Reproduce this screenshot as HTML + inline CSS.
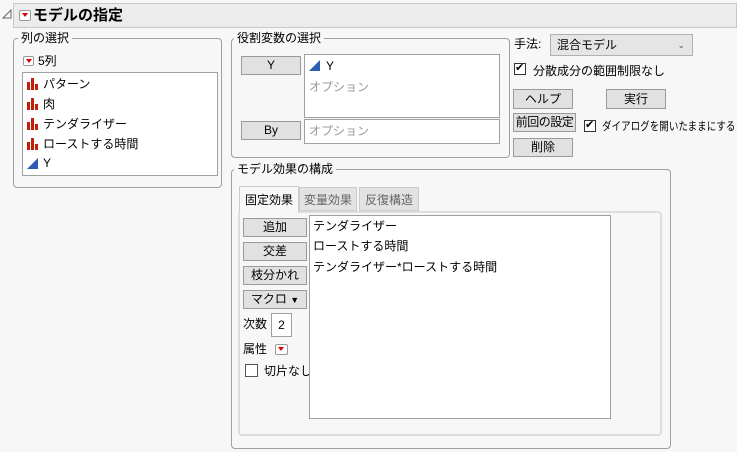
<!DOCTYPE html>
<html><head><meta charset="utf-8"><style>
*{box-sizing:border-box;margin:0;padding:0}
body{width:737px;height:452px;background:#f7f7f7;font-family:"Liberation Sans","Noto Sans CJK JP",sans-serif;font-size:12px;color:#000;position:relative;overflow:hidden}
.a{position:absolute;white-space:nowrap}
.grp{position:absolute;border:1px solid #a0a0a0;border-radius:4px}
.lbl{position:absolute;background:#f7f7f7;padding:0 3px;line-height:14px;font-size:12px;white-space:nowrap}
.btn{position:absolute;background:#e1e1e1;border:1px solid #9a9a9a;text-align:center;font-size:12px;white-space:nowrap}
.box{position:absolute;background:#fff;border:1px solid #a0a0a0}
.red{position:absolute;width:11px;height:10px;border:1px solid #999;background:#fff;border-radius:2px}
.red:after{content:"";position:absolute;left:2px;top:2px;border-left:3px solid transparent;border-right:3px solid transparent;border-top:4px solid #d00}
.cb{position:absolute;width:12px;height:12px;border:1px solid #333;background:#fff}
.t{position:absolute;line-height:14px;white-space:nowrap}
</style></head><body>
<svg class="a" style="left:2px;top:9px" width="10" height="10"><polygon points="9,1 9,9 1,9" fill="none" stroke="#666"/></svg>
<div class="a" style="left:13px;top:3px;width:724px;height:25px;background:#ececec;border:1px solid #c8c8c8"></div>
<div class="red" style="left:19px;top:10px;width:12px;height:11px"></div>
<div class="a" style="left:33px;top:6px;font-size:15px;font-weight:bold;line-height:20px">モデルの指定</div>

<div class="grp" style="left:13px;top:38px;width:209px;height:150px"></div>
<div class="lbl" style="left:18px;top:31px">列の選択</div>
<div class="red" style="left:23px;top:56px"></div>
<div class="t" style="left:38px;top:54px">5列</div>
<div class="box" style="left:22px;top:72px;width:196px;height:104px"></div>
<svg class="a" style="left:26px;top:78px" width="12" height="92">
<g fill="#c0200a"><rect x="1" y="4" width="3" height="8"/><rect x="5" y="0" width="3" height="12"/><rect x="9" y="6" width="3" height="6"/>
<rect x="1" y="24" width="3" height="8"/><rect x="5" y="20" width="3" height="12"/><rect x="9" y="26" width="3" height="6"/>
<rect x="1" y="44" width="3" height="8"/><rect x="5" y="40" width="3" height="12"/><rect x="9" y="46" width="3" height="6"/>
<rect x="1" y="64" width="3" height="8"/><rect x="5" y="60" width="3" height="12"/><rect x="9" y="66" width="3" height="6"/></g>
<polygon points="1,91 12,80 12,91" fill="#2c5db4"/></svg>
<div class="t" style="left:43px;top:77px">パターン</div>
<div class="t" style="left:43px;top:97px">肉</div>
<div class="t" style="left:43px;top:117px">テンダライザー</div>
<div class="t" style="left:43px;top:137px">ローストする時間</div>
<div class="t" style="left:43px;top:156px">Y</div>

<div class="grp" style="left:231px;top:38px;width:279px;height:120px"></div>
<div class="lbl" style="left:234px;top:31px">役割変数の選択</div>
<div class="btn" style="left:241px;top:56px;width:60px;height:19px;line-height:17px">Y</div>
<div class="box" style="left:304px;top:54px;width:196px;height:64px"></div>
<svg class="a" style="left:309px;top:60px" width="12" height="12"><polygon points="0,11 11,0 11,11" fill="#2c5db4"/></svg>
<div class="t" style="left:326px;top:59px">Y</div>
<div class="t" style="left:309px;top:80px;color:#999">オプション</div>
<div class="btn" style="left:241px;top:121px;width:60px;height:19px;line-height:17px">By</div>
<div class="box" style="left:304px;top:119px;width:196px;height:25px"></div>
<div class="t" style="left:309px;top:124px;color:#999">オプション</div>

<div class="t" style="left:514px;top:37px">手法:</div>
<div class="a" style="left:550px;top:34px;width:143px;height:22px;background:#e5e5e5;border:1px solid #b0b0b0;padding-left:6px;line-height:20px">混合モデル<span style="position:absolute;right:7px;top:0;font-size:9px;color:#555">⌄</span></div>
<div class="cb" style="left:514px;top:63px"></div><div class="a" style="left:515px;top:61px;font-size:11px">✔</div>
<div class="t" style="left:533px;top:64px">分散成分の範囲制限なし</div>
<div class="btn" style="left:513px;top:89px;width:60px;height:20px;line-height:18px">ヘルプ</div>
<div class="btn" style="left:606px;top:89px;width:60px;height:20px;line-height:18px">実行</div>
<div class="btn" style="left:513px;top:113px;width:63px;height:19px;line-height:17px;letter-spacing:-0.5px">前回の設定</div>
<div class="cb" style="left:584px;top:120px"></div><div class="a" style="left:585px;top:118px;font-size:11px">✔</div>
<div class="t" style="left:602px;top:120px;font-size:11.5px;transform:scaleX(0.83);transform-origin:left center">ダイアログを開いたままにする</div>
<div class="btn" style="left:513px;top:138px;width:60px;height:19px;line-height:17px">削除</div>

<div class="grp" style="left:231px;top:169px;width:440px;height:280px"></div>
<div class="lbl" style="left:234px;top:162px">モデル効果の構成</div>
<div class="a" style="left:238px;top:211px;width:424px;height:225px;border:2px solid #ddd;border-radius:4px;background:#f7f7f7"></div>
<div class="a" style="left:239px;top:186px;width:60px;height:27px;background:#f7f7f7;border:1px solid #ccc;border-bottom:none;text-align:center;line-height:26px">固定効果</div>
<div class="a" style="left:299px;top:187px;width:58px;height:24px;background:#e3e3e3;border:1px solid #ccc;text-align:center;line-height:24px;color:#666">変量効果</div>
<div class="a" style="left:359px;top:187px;width:60px;height:24px;background:#e3e3e3;border:1px solid #ccc;text-align:center;line-height:24px;color:#666">反復構造</div>
<div class="btn" style="left:243px;top:218px;width:64px;height:19px;line-height:17px">追加</div>
<div class="btn" style="left:243px;top:242px;width:64px;height:19px;line-height:17px">交差</div>
<div class="btn" style="left:243px;top:266px;width:64px;height:19px;line-height:17px">枝分かれ</div>
<div class="btn" style="left:243px;top:290px;width:64px;height:19px;line-height:17px">マクロ <span style="font-size:9px">▼</span></div>
<div class="t" style="left:243px;top:317px">次数</div>
<div class="box" style="left:271px;top:313px;width:21px;height:24px;text-align:center;line-height:22px">2</div>
<div class="t" style="left:243px;top:342px">属性</div>
<div class="red" style="left:275px;top:344px;width:13px;height:11px"></div>
<div class="cb" style="left:245px;top:364px;width:13px;height:13px;border-color:#555"></div>
<div class="t" style="left:264px;top:364px">切片なし</div>
<div class="box" style="left:309px;top:215px;width:302px;height:204px"></div>
<div class="t" style="left:313px;top:219px">テンダライザー</div>
<div class="t" style="left:313px;top:239px">ローストする時間</div>
<div class="t" style="left:313px;top:260px">テンダライザー*ローストする時間</div>
</body></html>
